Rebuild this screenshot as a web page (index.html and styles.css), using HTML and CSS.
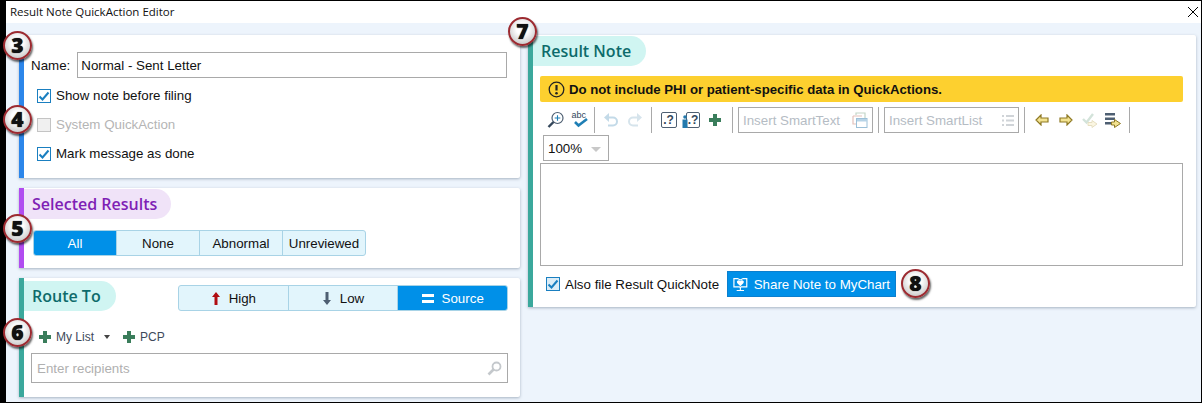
FILE: index.html
```html
<!DOCTYPE html>
<html lang="en">
<head>
  <meta charset="UTF-8">
  <title>Result Note QuickAction Editor</title>
  <link rel="stylesheet" href="styles.css">
</head>
<body>
  <div class="window">
    <header class="titlebar">
      <span>Result Note QuickAction Editor</span>
      <svg class="close" width="12" height="12" viewBox="0 0 12 12"><path d="M1 1l10 10M11 1L1 11" stroke="#000" fill="none"/></svg>
    </header>

    <main class="content">
      <div class="left-col">
        <section class="card card-general">
          <div class="name-row">
            <label class="name-label">Name:</label>
            <div class="field name-field">Normal - Sent Letter</div>
          </div>
          <div class="check-row"><span class="check on"><svg width="14" height="14" viewBox="0 0 14 14"><path d="M2.500 7.500l3 3 6-7" stroke="#1a7fc0" stroke-width="2" fill="none"/></svg></span>Show note before filing</div>
          <div class="check-row disabled"><span class="check"></span>System QuickAction</div>
          <div class="check-row"><span class="check on"><svg width="14" height="14" viewBox="0 0 14 14"><path d="M2.500 7.500l3 3 6-7" stroke="#1a7fc0" stroke-width="2" fill="none"/></svg></span>Mark message as done</div>
          <span class="badge badge-3">3</span>
          <span class="badge badge-4">4</span>
        </section>

        <section class="card card-results">
          <h2 class="pill pill-purple">Selected Results</h2>
          <div class="seg seg-results">
            <button class="active">All</button>
            <button>None</button>
            <button>Abnormal</button>
            <button>Unreviewed</button>
          </div>
          <span class="badge badge-5">5</span>
        </section>

        <section class="card card-route">
          <div class="route-head">
            <h2 class="pill pill-teal">Route To</h2>
            <div class="seg seg-route">
              <button><svg width="10" height="13" viewBox="0 0 10 13"><path d="M5 0l4 5H6.500v8h-3V5H1z" fill="#b00d12"/></svg>High</button>
              <button><svg width="10" height="13" viewBox="0 0 10 13"><path d="M5 13l4-5H6.500V0h-3v8H1z" fill="#4e5f72"/></svg>Low</button>
              <button class="active"><svg width="12" height="9" viewBox="0 0 12 9"><path d="M0 0h12v3H0zM0 6h12v3H0z" fill="#fff"/></svg>Source</button>
            </div>
          </div>
          <div class="route-links">
            <svg class="plus" width="12" height="12" viewBox="0 0 12 12"><path d="M4 0h4v4h4v4H8v4H4V8H0V4h4z" fill="#3a7d5b"/></svg>
            <span>My List</span>
            <span class="caret"></span>
            <svg class="plus" width="12" height="12" viewBox="0 0 12 12"><path d="M4 0h4v4h4v4H8v4H4V8H0V4h4z" fill="#3a7d5b"/></svg>
            <span>PCP</span>
          </div>
          <div class="field recipients">
            <span>Enter recipients</span>
            <svg width="15" height="15" viewBox="0 0 15 15"><circle cx="9.500" cy="5.500" r="4" fill="none" stroke="#c4c8cc" stroke-width="1.800"/><path d="M6.500 8.500l-5 5" stroke="#c4c8cc" stroke-width="2.600"/></svg>
          </div>
          <span class="badge badge-6">6</span>
        </section>
      </div>

      <section class="card card-note">
        <h2 class="pill pill-teal pill-note">Result Note</h2>
        <div class="warning">
          <svg width="17" height="17" viewBox="0 0 17 17"><circle cx="8.500" cy="8.500" r="7.300" fill="none" stroke="#222" stroke-width="1.300"/><path d="M8.500 4v5.500" stroke="#222" stroke-width="2.200"/><circle cx="8.500" cy="12.300" r="1.300" fill="#222"/></svg>
          <span>Do not include PHI or patient-specific data in QuickActions.</span>
        </div>

        <div class="toolbar">
          <span class="tool"><svg width="18" height="18" viewBox="0 0 18 18"><circle cx="10.500" cy="7" r="5.500" fill="#fff" stroke="#4e5f72" stroke-width="1.200"/><path d="M10.500 4.200v5.600M7.700 7h5.600" stroke="#1f7fb5" stroke-width="1.100"/><path d="M6.500 11L1.500 16" stroke="#33475b" stroke-width="2.400"/></svg></span>
          <span class="tool"><svg width="18" height="18" viewBox="0 0 18 18"><text x="0.500" y="7" class="abc">abc</text><path d="M4 11l3.500 3.500L16 8" stroke="#1f7fb5" stroke-width="2.600" fill="none"/></svg></span>
          <i class="sep sep-first"></i>
          <span class="tool tool-slim"><svg width="15" height="14" viewBox="0 0 15 14"><path d="M0 4.500L5 0v9z" fill="#c3dae8"/><path d="M4 4.500h5a4 4 0 0 1 0 8H4" fill="none" stroke="#c3dae8" stroke-width="2"/></svg></span>
          <span class="tool tool-slim"><svg width="15" height="14" viewBox="0 0 15 14"><path d="M15 4.500L10 0v9z" fill="#d6e4ec"/><path d="M11 4.500H6a4 4 0 0 0 0 8h5" fill="none" stroke="#d6e4ec" stroke-width="2"/></svg></span>
          <i class="sep"></i>
          <span class="tool tool-slim"><span class="qbox">.?</span></span>
          <span class="tool tool-slim"><span class="qbox qbox-person">.?</span><svg class="person" width="6" height="13" viewBox="0 0 6 13"><circle cx="3" cy="2" r="1.800" fill="#2379ad"/><path d="M.5 4.500h5V13h-5z" fill="#2379ad"/></svg></span>
          <span class="tool"><svg width="12" height="12" viewBox="0 0 12 12"><path d="M4 0h4v4h4v4H8v4H4V8H0V4h4z" fill="#3a7d5b"/></svg></span>
          <i class="sep"></i>
          <div class="field smart">
            <span>Insert SmartText</span>
            <svg width="16" height="16" viewBox="0 0 16 16"><path d="M4 3V1h9v5" fill="none" stroke="#c4d6c8" stroke-width="1.200"/><path d="M1 4h9M1 4v8h3" fill="none" stroke="#e3c2bb" stroke-width="1.200"/><rect x="4.500" y="6.500" width="10.500" height="9" fill="#fff" stroke="#9cc0d8"/><path d="M5 7h10v2.500H5z" fill="#b7d3e6"/></svg>
          </div>
          <i class="sep"></i>
          <div class="field smart">
            <span>Insert SmartList</span>
            <svg width="12" height="11" viewBox="0 0 12 11"><path d="M0 0h2v2H0zM4 0h8v2H4zM0 4.500h2v2H0zM4 4.500h8v2H4zM0 9h2v2H0zM4 9h8v2H4z" fill="#d0d4d8"/></svg>
          </div>
          <i class="sep"></i>
          <span class="tool"><svg width="14" height="12" viewBox="0 0 14 12"><path d="M6 1L1 6l5 5V8h7V4H6z" fill="#f3e391" stroke="#8f7a25" stroke-width="1.200"/></svg></span>
          <span class="tool"><svg width="14" height="12" viewBox="0 0 14 12"><path d="M8 1l5 5-5 5V8H1V4h7z" fill="#f3e391" stroke="#8f7a25" stroke-width="1.200"/></svg></span>
          <span class="tool"><svg width="16" height="16" viewBox="0 0 16 16"><path d="M1 7l3.500 3.500L11 2" fill="none" stroke="#d3e3da" stroke-width="2.400"/><path d="M10 8.500l5 3.500-5 3.500v-2H6v-3h4z" fill="#fbf6e2" stroke="#e6dfc2"/></svg></span>
          <span class="tool tool-last"><svg width="16" height="16" viewBox="0 0 16 16"><path d="M0 1h10v2.500H0zM0 5.500h10V8H0zM0 10h6v2.500H0z" fill="#4e5f72"/><path d="M9.500 7.500v2.500h-3v3h3v2.500l6-4z" fill="#f3e391" stroke="#8f7a25"/></svg></span>
          <i class="sep"></i>
        </div>

        <div class="field zoom-select">
          <span>100%</span>
          <span class="caret caret-light"></span>
        </div>

        <div class="field note-box"></div>

        <div class="note-foot">
          <div class="check-row"><span class="check on tinted"><svg width="14" height="14" viewBox="0 0 14 14"><path d="M2.500 7.500l3 3 6-7" stroke="#1a7fc0" stroke-width="2" fill="none"/></svg></span>Also file Result QuickNote</div>
          <button class="share">
            <svg width="16" height="15" viewBox="0 0 16 15"><path d="M1 1h4l3 1.500L11 1h4v9H9l-1 1-1-1H1z" fill="none" stroke="#fff" stroke-width="1.300"/><path d="M8 9.500L4.500 6a2 2 0 0 1 3.500-2 2 2 0 0 1 3.500 2z" fill="#fff"/><path d="M8 11v2.500M4 14h8" stroke="#fff" stroke-width="1.200"/></svg>
            Share Note to MyChart
          </button>
          <span class="badge badge-8">8</span>
        </div>
        <span class="badge badge-7">7</span>
      </section>
    </main>
  </div>
</body>
</html>
```

FILE: styles.css
```css
* { box-sizing: border-box; }
html, body { margin: 0; height: 403px; overflow: hidden; background: #000; }
body { font-family: "Liberation Sans", Arial, sans-serif; font-size: 13.33px; color: #111; padding: 1px 1px 1px 6px; }

.window { height: 401px; background: #edf4fc; display: flex; flex-direction: column; }
.titlebar { height: 22px; flex: none; background: #fff; display: flex; justify-content: space-between; align-items: center; padding: 0 2px 2px 4px; font-family: "Open Sans", sans-serif; font-size: 11.500px; }
.close { margin-top: 1px; }

.content { display: flex; gap: 8px; padding: 12px 5px 0 13px; align-items: flex-start; }
.left-col { width: 501px; flex: none; display: flex; flex-direction: column; gap: 10px; }

.card { position: relative; background: #fff; border-left: 5px solid #2c86ea; border-radius: 0 2px 2px 0; box-shadow: 0 1px 3px rgba(80, 100, 120, .45); }
.card-general { height: 143px; padding: 17px 13px 0 7px; }
.card-results { height: 80px; border-left-color: #b14cf0; padding-top: 1px; }
.card-route { height: 119px; border-left-color: #3ba89c; padding-top: 3px; }
.card-note { flex: 1; height: 272px; border-left-color: #3ba89c; padding: 1px 13px 0 7px; }

.name-row { display: flex; align-items: center; gap: 7px; height: 26px; }
.field { border: 1px solid #a9a9a9; background: #fff; display: flex; align-items: center; }
.name-field { flex: 1; height: 26px; padding: 0 3px; }

.check-row { display: flex; align-items: center; gap: 5px; height: 29px; padding-left: 6px; }
.card-general .name-row + .check-row { margin-top: 3px; }
.check { width: 14px; height: 14px; border: 1px solid #c4c4c4; background: #f0f0f0; flex: none; display: block; }
.check.on { border-color: #1a7fc0; background: #fff; }
.check.tinted { background: #dcedf7; }
.check svg { display: block; margin: -1px; }
.disabled { color: #b5b5b5; }

.pill { margin: 0; height: 30px; display: inline-flex; align-items: center; padding: 0 15px 0 8px; border-radius: 0 15px 15px 0; font-family: "Open Sans", sans-serif; font-size: 16px; font-weight: 600; white-space: nowrap; }
.pill-purple { background: #f0e3f8; color: #7f1fb5; padding-right: 14px; }
.pill-teal { background: #d0f5f2; color: #0d6b6b; }
.pill-note { margin-left: -7px; }

.seg { display: flex; border: 1px solid #a8d3e6; border-radius: 3px; background: #e2f5fc; overflow: hidden; }
.seg button { flex: 1 1 0; height: 24px; margin: 0; padding: 0; border: 0; border-left: 1px solid #a8d3e6; background: none; font: 13.33px "Liberation Sans", Arial, sans-serif; color: #111; display: flex; align-items: center; justify-content: center; gap: 8px; }
.seg button:first-child { border-left: 0; }
.seg .active { background: #0090e8; color: #fff; }
.seg-results { width: 333px; margin: 11px 0 0 9px; }
.route-head { display: flex; justify-content: space-between; align-items: flex-start; padding-right: 12px; }
.seg-route { width: 330px; margin-top: 4px; }

.route-links { display: flex; align-items: center; height: 18px; margin: 17px 0 0 15px; color: #3d4a5a; font-size: 12px; }
.route-links .plus { margin-right: 5px; }
.caret { width: 0; height: 0; border: 3.500px solid transparent; border-top: 4px solid #444; border-bottom: 0; margin: 0 13px 0 10px; }
.recipients { height: 30px; margin: 7px 12px 0 7px; padding: 0 5px; justify-content: space-between; color: #b0b0b0; }

.warning { display: flex; align-items: center; gap: 4px; height: 26px; margin-top: 10px; padding-left: 8px; background: #fdd02f; border-radius: 2px; font-weight: 700; font-size: 13.200px; }

.toolbar { display: flex; align-items: center; height: 26px; margin-top: 5px; padding-left: 4px; }
.tool { width: 24px; flex: none; display: flex; align-items: center; justify-content: center; position: relative; }
.tool-slim { width: 23px; }
.tool-last { width: 22px; }
.sep { width: 1px; height: 26px; background: #a9a9a9; margin: 0 5px; flex: none; }
.sep-first { margin-left: 2px; }
.abc { font: 9px "Liberation Sans", Arial, sans-serif; fill: #33475b; }
.qbox { width: 16px; height: 16px; border: 1px solid #4e5f72; border-radius: 2px; display: block; text-align: center; font-weight: 700; font-size: 12px; line-height: 14px; color: #33475b; }
.qbox-person { width: 14px; margin-left: 3px; }
.person { position: absolute; left: 2px; top: 3px; }
.smart { width: 135px; height: 26px; flex: none; padding: 0 4px; justify-content: space-between; color: #b5bcc4; }

.zoom-select { width: 66px; height: 26px; margin: 2px 0 0 3px; padding: 0 4px; justify-content: space-between; }
.caret-light { border-width: 5px; border-top: 5px solid #c8c8c8; border-bottom: 0; margin: 2px 3px 0 0; }
.note-box { height: 103px; margin-top: 2px; }

.note-foot { display: flex; align-items: center; height: 26px; margin-top: 5px; position: relative; }
.note-foot .check-row { width: 187px; }
.share { height: 26px; width: 169px; border: 1px solid #0b7fce; background: #0090e8; color: #fff; display: flex; align-items: center; gap: 6px; padding: 0 5px; font: 13.33px "Liberation Sans", Arial, sans-serif; white-space: nowrap; }

.badge { position: absolute; width: 29px; height: 29px; border-radius: 50%; background: radial-gradient(circle at 50% 40%, #fff 30%, #cfcfcf 75%); border: 2px solid #9c2a30; box-shadow: 1px 2px 2px rgba(0, 0, 0, .6); display: flex; align-items: center; justify-content: center; font: 800 21px/1 "Open Sans", sans-serif; color: #111; text-shadow: 0 0 1px #000; }
.badge-3 { left: -21px; top: -4px; }
.badge-4 { left: -21px; top: 70px; }
.badge-5 { left: -21px; top: 26px; }
.badge-6 { left: -21px; top: 40px; }
.badge-7 { left: -25px; top: -18px; }
.badge-8 { left: 361px; top: -2px; }
```
